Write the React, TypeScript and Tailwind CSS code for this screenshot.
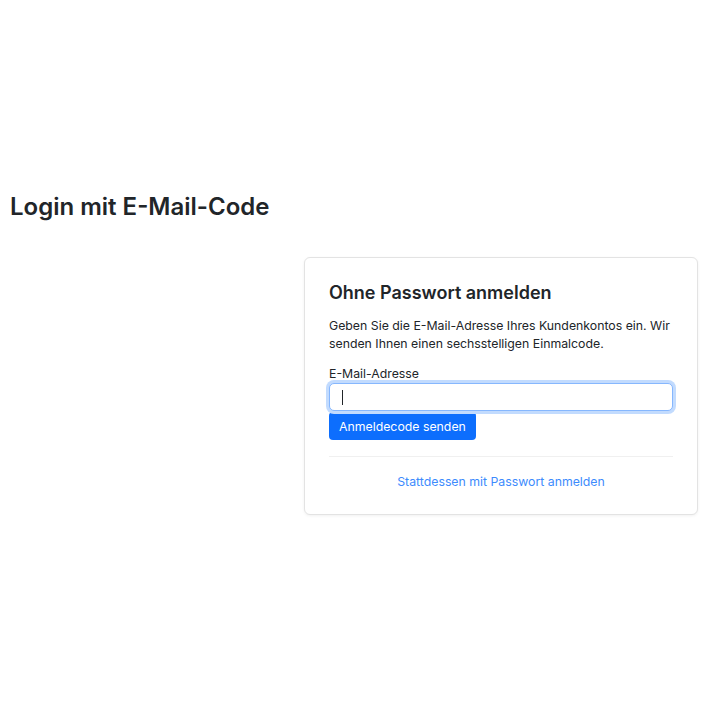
import React from "react";

function LoginCard() {
  const [email, setEmail] = React.useState("");

  return (
    <div className="ml-[294px] mt-[36px] w-[394px] rounded-[6px] border border-[#e3e3e3] bg-white px-[24px] pb-[23px] pt-[24px] shadow-[0_1px_3px_rgba(0,0,0,0.06)]">
      <h2 className="text-[18px] font-semibold leading-[22px] text-[#212529]">Ohne Passwort anmelden</h2>
      <p className="mt-[13px] text-[12.3px] leading-[18px] text-[#212529]">
        Geben Sie die E-Mail-Adresse Ihres Kundenkontos ein. Wir senden Ihnen einen sechsstelligen Einmalcode.
      </p>
      <label className="mt-[12px] block text-[12.3px] leading-[18px] text-[#212529]">E-Mail-Adresse</label>
      <div className="relative h-[28px] rounded-[5px] border border-[#86b7fe] bg-white ring-[3px] ring-[#c2dbfe]">
        <input
          value={email}
          onChange={(e) => setEmail(e.target.value)}
          className="h-full w-full bg-transparent px-[12px] text-[12.3px] outline-none"
        />
        {email === "" && (
          <span className="pointer-events-none absolute left-[12px] top-[6px] h-[15px] w-px bg-[#212529]" />
        )}
      </div>
      <button className="mt-[1px] h-[28px] rounded-[4px] bg-[#0d6efd] px-[10px] pt-[1px] text-[12.3px] leading-[18px] text-white">
        Anmeldecode senden
      </button>
      <div className="mt-[16px] h-px bg-[#f0f0f0]" />
      <div className="mt-[16px] text-center text-[12.3px] leading-[18px]">
        <a href="#" className="text-[#3d8bfd]">Stattdessen mit Passwort anmelden</a>
      </div>
    </div>
  );
}

export default function App() {
  return (
    <div className="min-h-[720px] bg-white font-['Inter',sans-serif] text-[#212529]">
      <div className="px-[10px] pt-[192px]">
        <h1 className="text-[24px] font-semibold leading-[29px]">Login mit E-Mail-Code</h1>
        <LoginCard />
      </div>
    </div>
  );
}
